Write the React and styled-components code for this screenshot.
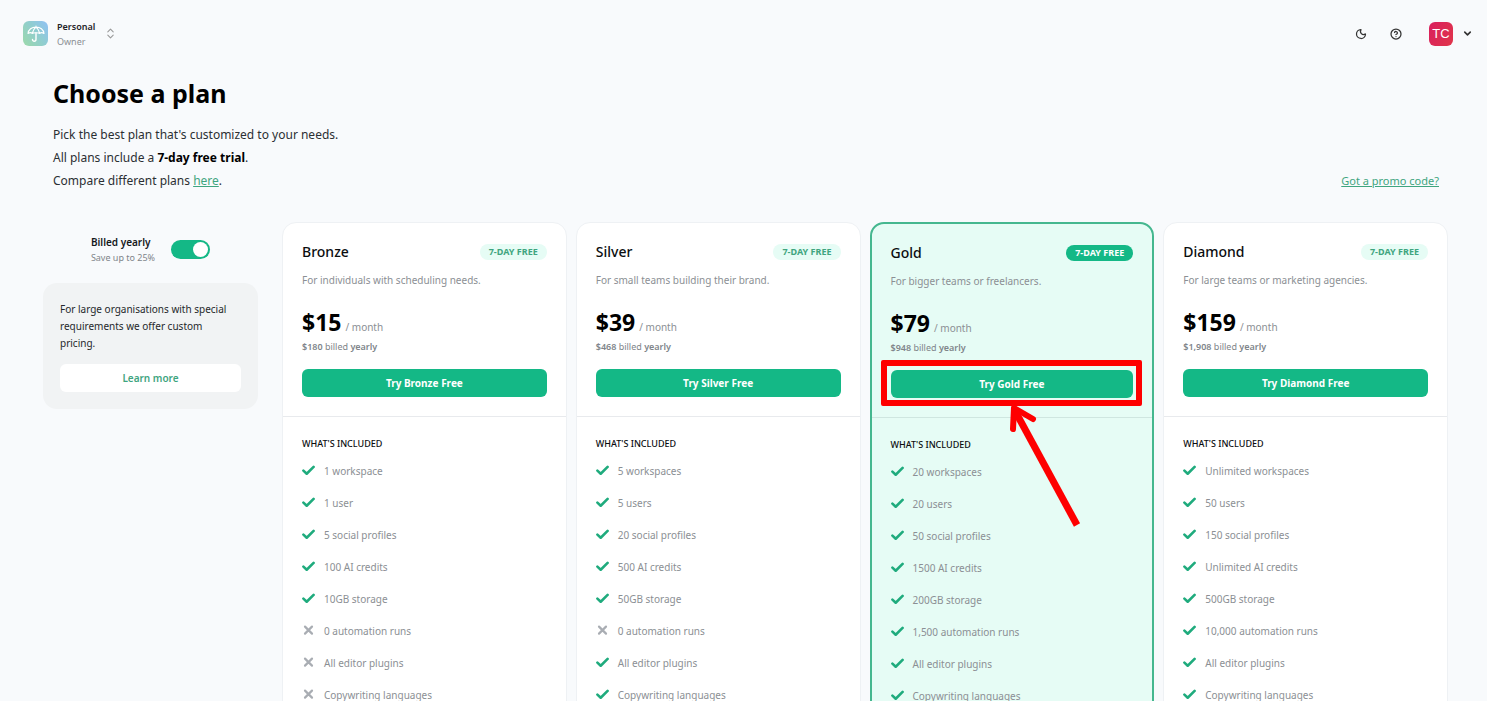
import React, { useState } from "react";
import styled, { createGlobalStyle, css } from "styled-components";
import { Moon, CircleHelp, ChevronDown, ChevronsUpDown } from "lucide-react";

const GlobalStyle = createGlobalStyle`
  *, *::before, *::after { box-sizing: border-box; }
  body {
    margin: 0;
    background: #f8fafc;
    color: #111;
    font-family: "Noto Sans", "Open Sans", sans-serif;
    font-size: 10px;
  }
  h1, h2, h3, p, ul { margin: 0; padding: 0; }
  button { font-family: inherit; cursor: pointer; }
`;

const Page = styled.div`
  height: 100vh;
  overflow-y: auto;
  scrollbar-width: none;
`;

const TopBar = styled.header`
  display: flex;
  align-items: center;
  justify-content: space-between;
  height: 67px;
  padding: 0 14px 0 23px;
`;

const WorkspaceButton = styled.button`
  display: flex;
  align-items: center;
  padding: 0;
  border: 0;
  background: none;
  text-align: left;
  color: #999;
`;

const WorkspaceLogo = styled.span`
  display: flex;
  align-items: center;
  justify-content: center;
  width: 25px;
  height: 25px;
  border-radius: 6px;
  background: linear-gradient(55deg, #9ad7b0 10%, #90cdd0 55%, #90c0f5 100%);
`;

const WorkspaceText = styled.span`
  display: flex;
  flex-direction: column;
  margin: 0 9px;
  font-size: 9px;
  line-height: 15px;
  color: #8b8f94;

  strong {
    font-weight: 600;
    color: #1f2328;
  }
`;

const Actions = styled.div`
  display: flex;
  align-items: center;
`;

const IconButton = styled.button`
  display: flex;
  margin-right: 23px;
  padding: 0;
  border: 0;
  background: none;
  color: #333;
`;

const AccountButton = styled(IconButton)`
  align-items: center;
  gap: 9px;
  margin: 0 0 0 4px;
`;

const Avatar = styled.span`
  width: 24px;
  height: 24px;
  border-radius: 6px;
  background: linear-gradient(120deg, #d91f5e, #e0354a);
  color: #fff;
  font: 13px/24px "Liberation Sans", sans-serif;
  text-align: center;
`;

const Intro = styled.section`
  display: flex;
  justify-content: space-between;
  align-items: flex-end;
  padding: 9px 48px 30px 53px;
`;

const Title = styled.h1`
  margin-bottom: 12px;
  font-size: 25px;
  line-height: 35px;
  font-weight: 700;
  color: #000;
`;

const IntroText = styled.p`
  font-size: 12px;
  line-height: 23px;
  color: #2b2f33;

  strong { color: #000; }
`;

const TextLink = styled.a`
  color: #3fa57f;
  text-decoration: underline;
`;

const PromoLink = styled(TextLink)`
  font-size: 11px;
  line-height: 22px;
`;

const Plans = styled.main`
  display: grid;
  grid-template-columns: 215px 1fr;
  gap: 24px;
  padding: 0 39px 0 43px;
`;

const Sidebar = styled.aside`
  padding-top: 12px;
`;

const BillingToggle = styled.label`
  display: flex;
  align-items: center;
  justify-content: center;
  gap: 16px;
  margin-bottom: 18px;
  cursor: pointer;
`;

const BillingText = styled.span`
  display: flex;
  flex-direction: column;
  font-size: 9px;
  line-height: 14px;
  color: #80858a;

  strong {
    font-size: 10px;
    line-height: 17px;
    font-weight: 600;
    color: #15181b;
  }
`;

const Switch = styled.input`
  appearance: none;
  width: 39px;
  height: 19px;
  margin: 0;
  padding: 2px;
  border-radius: 10px;
  background: ${(p) => (p.checked ? "#14b886" : "#c8cdd2")};
  cursor: pointer;

  &::before {
    content: "";
    display: block;
    width: 15px;
    height: 15px;
    margin-left: ${(p) => (p.checked ? "auto" : 0)};
    border-radius: 50%;
    background: #fff;
  }
`;

const CustomPricing = styled.section`
  padding: 18px 17px 17px;
  border-radius: 14px;
  background: #f1f3f4;

  p {
    padding-right: 8px;
    line-height: 17px;
    color: #25282b;
  }
`;

const LearnMore = styled.button`
  width: 100%;
  height: 28px;
  margin-top: 12px;
  border: 0;
  border-radius: 6px;
  background: #fff;
  color: #3fa57f;
  font-size: 10px;
  font-weight: 600;
`;

const Cards = styled.div`
  display: grid;
  grid-template-columns: repeat(4, 1fr);
  gap: 9px;
`;

const Card = styled.article`
  border: 1px solid #eef1f4;
  border-radius: 14px;
  background: #fff;

  ${(p) =>
    p.$featured &&
    css`
      border: 2px solid #45b78f;
      background: #e6fcf5;
    `}
`;

const CardTop = styled.div`
  padding: 18px 19px 19px;
  border-bottom: 1px solid ${(p) => (p.$featured ? "#cfe6e0" : "#e8eaed")};
`;

const CardHead = styled.div`
  display: flex;
  align-items: center;
  justify-content: space-between;
  margin-bottom: 7px;
`;

const PlanName = styled.h2`
  font-size: 14px;
  line-height: 22px;
  font-weight: 500;
  color: #0b0d0f;
`;

const Badge = styled.span`
  padding: 0 9px;
  border-radius: 8px;
  background: ${(p) => (p.$featured ? "#14b886" : "#e6fcf5")};
  color: ${(p) => (p.$featured ? "#fff" : "#3fa57f")};
  font-size: 9px;
  line-height: 16px;
  font-weight: 700;
`;

const Description = styled.p`
  margin-bottom: 16px;
  line-height: 20px;
  color: #8b8f94;
`;

const Price = styled.p`
  display: flex;
  align-items: baseline;
  gap: 4px;
  line-height: 16px;
  color: #8b8f94;

  strong {
    font-size: 23px;
    line-height: 32px;
    color: #000;
  }
`;

const Billed = styled.p`
  margin-bottom: 13px;
  font-size: 9px;
  line-height: 18px;
  color: #80858a;

  strong { font-weight: 600; }
`;

const TryWrap = styled.div`
  position: relative;
`;

const TryButton = styled.button`
  display: block;
  width: 100%;
  height: 28px;
  border: 0;
  border-radius: 6px;
  background: #14b886;
  color: #fff;
  font-size: 10px;
  font-weight: 700;
`;

const Highlight = styled.div`
  position: absolute;
  inset: -10px -9px -8px -10px;
  border: 6px solid #fe0000;
  border-radius: 2px;
  pointer-events: none;
`;

const Arrow = styled.svg`
  position: absolute;
  top: 34px;
  left: 50%;
  width: 80px;
  height: 130px;
  margin-left: -8px;
  pointer-events: none;
`;

const CardBody = styled.div`
  padding: 16px 19px;
`;

const IncludedTitle = styled.h3`
  font-size: 9px;
  line-height: 22px;
  font-weight: 500;
  color: #0b0d0f;
`;

const Features = styled.ul`
  list-style: none;
`;

const Feature = styled.li`
  display: flex;
  align-items: center;
  gap: 9px;
  height: 32px;
  color: #8b8f94;
`;

const Umbrella = () => (
  <svg width="20" height="20" viewBox="0 0 20 20" fill="none" stroke="#fff" strokeLinecap="round" strokeLinejoin="round" strokeWidth="1.1">
    <path d="M2 9.5C2.4 5.6 5.8 3 10 3s7.600 2.600 8 6.500c-1.600-1.100-3.200-1.100-4.200 0-1.100-1.100-6.500-1.100-7.600 0C5.200 8.400 3.600 8.400 2 9.500ZM10 2v1M10 3C8 4.500 7 6.600 6.200 9.500M10 3c2 1.500 3 3.600 3.800 6.500" />
    <path d="M10 9v6.300c0 2.600-3.500 2.500-3.500.2" strokeWidth="1.400" />
  </svg>
);

const Check = () => (
  <svg width="13" height="12" viewBox="0 0 13 12" fill="none" aria-hidden="true">
    <path d="M1.400 5.600 4.700 8.700 11.600 1.900" stroke="#1fab7d" strokeWidth="2.600" strokeLinecap="round" strokeLinejoin="round" />
  </svg>
);

const Cross = () => (
  <svg width="13" height="12" viewBox="0 0 13 12" fill="none" aria-hidden="true">
    <path d="M3 1.600 10 8.600M10 1.600 3 8.600" stroke="#a9adb3" strokeWidth="2.200" strokeLinecap="round" />
  </svg>
);

const PLANS = [
  {
    name: "Bronze", description: "For individuals with scheduling needs.", price: "$15", yearly: "$180",
    features: ["1 workspace", "1 user", "5 social profiles", "100 AI credits", "10GB storage", "0 automation runs", "All editor plugins", "Copywriting languages"],
    missing: [5, 6, 7],
  },
  {
    name: "Silver", description: "For small teams building their brand.", price: "$39", yearly: "$468",
    features: ["5 workspaces", "5 users", "20 social profiles", "500 AI credits", "50GB storage", "0 automation runs", "All editor plugins", "Copywriting languages"],
    missing: [5],
  },
  {
    name: "Gold", description: "For bigger teams or freelancers.", price: "$79", yearly: "$948", featured: true,
    features: ["20 workspaces", "20 users", "50 social profiles", "1500 AI credits", "200GB storage", "1,500 automation runs", "All editor plugins", "Copywriting languages"],
    missing: [],
  },
  {
    name: "Diamond", description: "For large teams or marketing agencies.", price: "$159", yearly: "$1,908",
    features: ["Unlimited workspaces", "50 users", "150 social profiles", "Unlimited AI credits", "500GB storage", "10,000 automation runs", "All editor plugins", "Copywriting languages"],
    missing: [],
  },
];

function PlanCard({ plan }) {
  return (
    <Card $featured={plan.featured}>
      <CardTop $featured={plan.featured}>
        <CardHead>
          <PlanName>{plan.name}</PlanName>
          <Badge $featured={plan.featured}>7-DAY FREE</Badge>
        </CardHead>
        <Description>{plan.description}</Description>
        <Price><strong>{plan.price}</strong> <span>/ month</span></Price>
        <Billed><strong>{plan.yearly}</strong> billed <strong>yearly</strong></Billed>
        <TryWrap>
          <TryButton type="button">Try {plan.name} Free</TryButton>
          {plan.featured && (
            <>
              <Highlight />
              <Arrow viewBox="0 0 80 130" fill="none" stroke="#fe0000" strokeWidth="6" aria-hidden="true">
                <path d="M73 121 10 5" strokeWidth="7" />
                <path d="M9 25 10 4 29 15" strokeLinecap="round" strokeLinejoin="round" />
              </Arrow>
            </>
          )}
        </TryWrap>
      </CardTop>
      <CardBody>
        <IncludedTitle>WHAT'S INCLUDED</IncludedTitle>
        <Features>
          {plan.features.map((text, i) => (
            <Feature key={text}>
              {plan.missing.includes(i) ? <Cross /> : <Check />}
              {text}
            </Feature>
          ))}
        </Features>
      </CardBody>
    </Card>
  );
}

export default function App() {
  const [yearly, setYearly] = useState(true);
  return (
    <Page>
      <GlobalStyle />
      <TopBar>
        <WorkspaceButton type="button">
          <WorkspaceLogo><Umbrella /></WorkspaceLogo>
          <WorkspaceText><strong>Personal</strong>Owner</WorkspaceText>
          <ChevronsUpDown size={13} strokeWidth={2} />
        </WorkspaceButton>
        <Actions>
          <IconButton type="button" aria-label="Dark mode"><Moon size={12} strokeWidth={2.5} /></IconButton>
          <IconButton type="button" aria-label="Help"><CircleHelp size={12} strokeWidth={2.5} /></IconButton>
          <AccountButton type="button" aria-label="Account">
            <Avatar>TC</Avatar>
            <ChevronDown size={11} strokeWidth={3.500} />
          </AccountButton>
        </Actions>
      </TopBar>
      <Intro>
        <div>
          <Title>Choose a plan</Title>
          <IntroText>Pick the best plan that's customized to your needs.</IntroText>
          <IntroText>All plans include a <strong>7-day free trial</strong>.</IntroText>
          <IntroText>Compare different plans <TextLink href="#compare">here</TextLink>.</IntroText>
        </div>
        <PromoLink href="#promo">Got a promo code?</PromoLink>
      </Intro>
      <Plans>
        <Sidebar>
          <BillingToggle>
            <BillingText><strong>Billed yearly</strong>Save up to 25%</BillingText>
            <Switch type="checkbox" role="switch" checked={yearly} onChange={(e) => setYearly(e.target.checked)} />
          </BillingToggle>
          <CustomPricing>
            <p>For large organisations with special requirements we offer custom pricing.</p>
            <LearnMore type="button">Learn more</LearnMore>
          </CustomPricing>
        </Sidebar>
        <Cards>
          {PLANS.map((plan) => <PlanCard key={plan.name} plan={plan} />)}
        </Cards>
      </Plans>
    </Page>
  );
}
